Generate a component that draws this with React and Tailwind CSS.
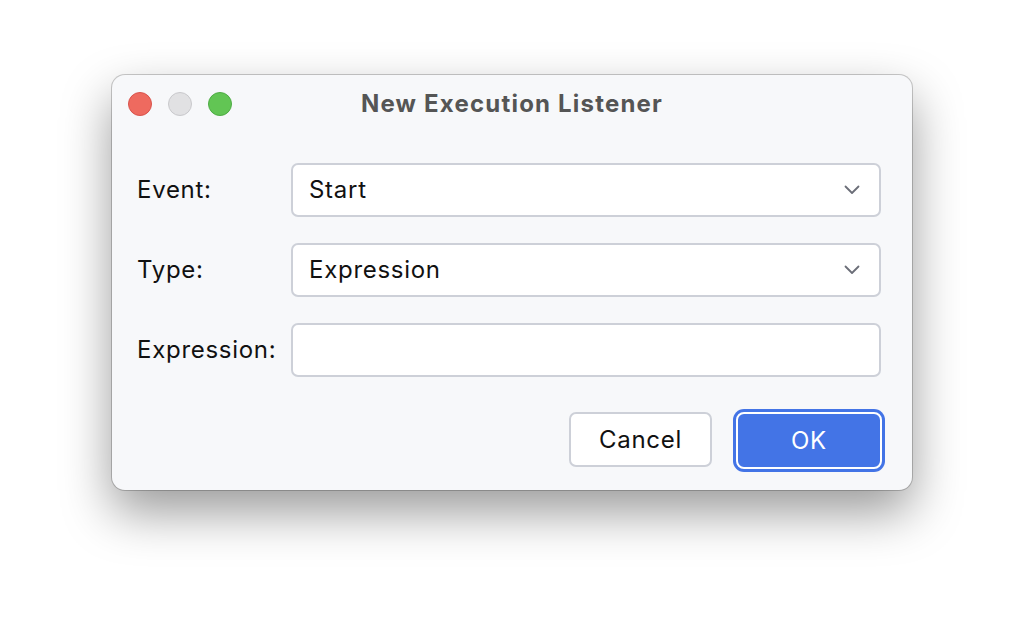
import React from 'react';

function Chevron() {
  return (
    <svg width="16" height="10" viewBox="0 0 16 10" fill="none" className="shrink-0">
      <path d="M1.5 1.5 L8 8 L14.5 1.5" stroke="#6b6e78" strokeWidth="1.8" strokeLinecap="round" strokeLinejoin="round" />
    </svg>
  );
}

function Field({ label, value, select }) {
  return (
    <div className="flex items-center">
      <div className="w-[154px] shrink-0 text-[24px] tracking-[0.03em] text-[#111]">{label}</div>
      <div className="flex h-[54px] w-[590px] items-center justify-between rounded-[7px] border-2 border-[#cdd0d8] bg-white pl-[16px] pr-[19px] text-[24px] tracking-[0.03em] text-[#111]">
        <span>{value}</span>
        {select && <Chevron />}
      </div>
    </div>
  );
}

export default function App() {
  return (
    <div
      className="min-h-[638px] w-[1024px] bg-white pl-[112px] pt-[75px]"
      style={{ fontFamily: 'Inter, "Noto Sans", sans-serif' }}
    >
      <div className="flex h-[415px] w-[800px] flex-col rounded-[13px] bg-[#f7f8fa] shadow-[0_22px_50px_rgba(0,0,0,0.4)] ring-1 ring-black/20">
        <div className="relative flex h-[58px] items-center justify-center">
          <div className="absolute left-[16px] top-[17px] flex gap-[16px]">
            <span className="h-[24px] w-[24px] rounded-full border border-[#d9534c] bg-[#ee6a5f]" />
            <span className="h-[24px] w-[24px] rounded-full border border-[#c9c9cc] bg-[#e1e1e3]" />
            <span className="h-[24px] w-[24px] rounded-full border border-[#4eac44] bg-[#62c554]" />
          </div>
          <div className="text-[24px] font-bold tracking-[0.05em] text-[#555]">New Execution Listener</div>
        </div>
        <div className="flex flex-col gap-[26px] pl-[25px] pt-[30px]">
          <Field label="Event:" value="Start" select />
          <Field label="Type:" value="Expression" select />
          <Field label="Expression:" value="" />
        </div>
        <div className="flex justify-end gap-[24px] pr-[30px] pt-[35px]">
          <button className="h-[55px] w-[143px] rounded-[7px] border-2 border-[#cdd0d8] bg-white text-[24px] tracking-[0.03em] text-[#111]">
            Cancel
          </button>
          <button className="h-[57px] w-[146px] rounded-[8px] border-2 border-white bg-[#4374e6] text-[24px] tracking-[0.03em] text-white ring-[3px] ring-[#4374e6]">
            OK
          </button>
        </div>
      </div>
    </div>
  );
}
